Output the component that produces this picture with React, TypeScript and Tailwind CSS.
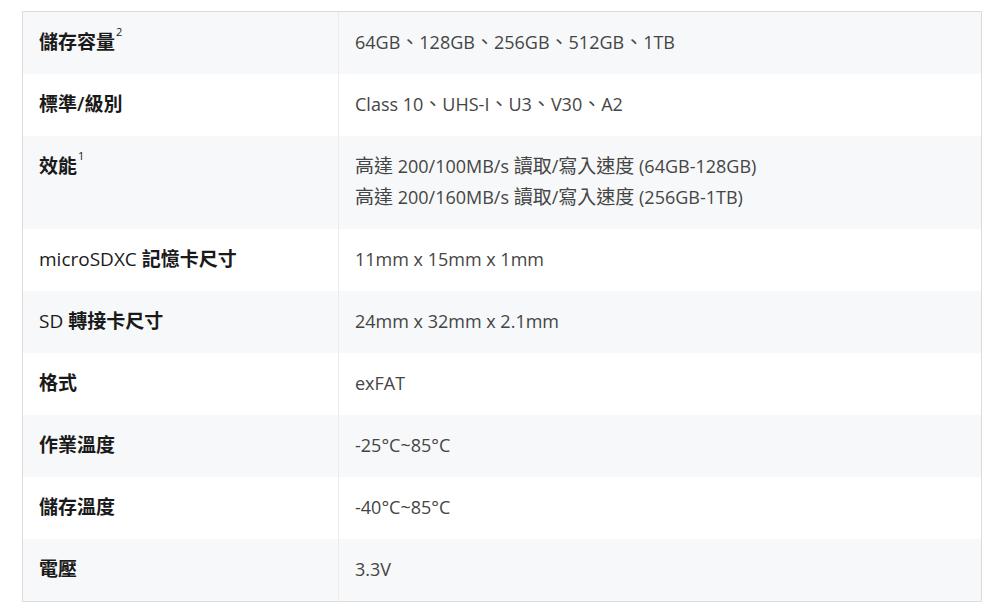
const rows: { label: string; sup?: string; values: string[] }[] = [
  { label: "儲存容量", sup: "2", values: ["64GB、128GB、256GB、512GB、1TB"] },
  { label: "標準/級別", values: ["Class 10、UHS-I、U3、V30、A2"] },
  {
    label: "效能",
    sup: "1",
    values: [
      "高達 200/100MB/s 讀取/寫入速度 (64GB-128GB)",
      "高達 200/160MB/s 讀取/寫入速度 (256GB-1TB)",
    ],
  },
  { label: "microSDXC 記憶卡尺寸", values: ["11mm x 15mm x 1mm"] },
  { label: "SD 轉接卡尺寸", values: ["24mm x 32mm x 2.1mm"] },
  { label: "格式", values: ["exFAT"] },
  { label: "作業溫度", values: ["-25°C~85°C"] },
  { label: "儲存溫度", values: ["-40°C~85°C"] },
  { label: "電壓", values: ["3.3V"] },
];

const isCjk = (s: string) => /[\u3000-\u9fff]/.test(s);

// latin parts of the label stay regular, CJK parts are bold
function Label({ text }: { text: string }) {
  const parts = text.split(/([\u3000-\u9fff/]+)/).filter(Boolean);
  return (
    <>
      {parts.map((p, i) =>
        isCjk(p) ? (
          <span key={i} className="font-semibold">{p}</span>
        ) : (
          <span key={i}>{p}</span>
        )
      )}
    </>
  );
}

// CJK glyphs render a little larger than the latin text next to them
function Value({ text }: { text: string }) {
  const parts = text.split(/([\u3000-\u9fff]+)/).filter(Boolean);
  return (
    <div>
      {parts.map((p, i) =>
        isCjk(p) ? (
          <span key={i} className="text-[19px]">{p}</span>
        ) : (
          <span key={i}>{p}</span>
        )
      )}
    </div>
  );
}

export default function App() {
  return (
    <div
      className="w-[1000px] h-[614px] bg-white pt-[11px] pl-[22px]"
      style={{ fontFamily: '"Open Sans", "Noto Sans CJK TC", sans-serif' }}
    >
      <div className="w-[960px] border border-[#dcdcdc]">
        {rows.map((r, i) => (
          <div
            key={i}
            className={`flex ${i % 2 === 0 ? "bg-[#f7f8f9]" : "bg-white"}`}
          >
            <div className="w-[316px] shrink-0 border-r border-[#ececec] pl-[16px] pt-[15px] pb-[16px] leading-[31px] text-[19px] text-[#1a1a1a]">
              <Label text={r.label} />
              {r.sup && (
                <sup className="text-[11px] align-super leading-none ml-[1px]">
                  {r.sup}
                </sup>
              )}
            </div>
            <div className="flex-1 pl-[16px] pt-[15px] pb-[16px] text-[18px] leading-[31px] text-[#454545]">
              {r.values.map((v, j) => (
                <Value key={j} text={v} />
              ))}
            </div>
          </div>
        ))}
      </div>
    </div>
  );
}
